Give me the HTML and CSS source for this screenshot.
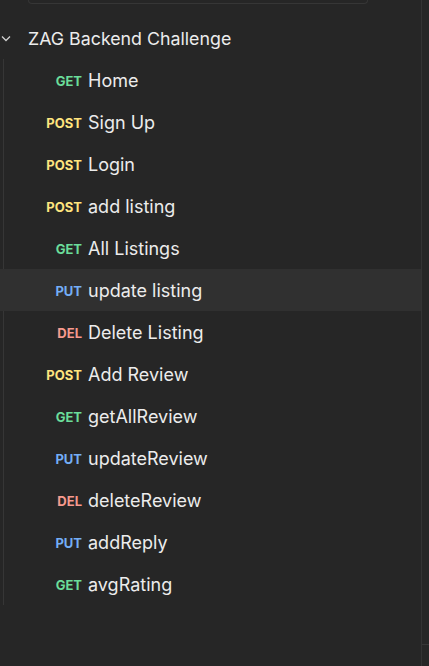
FILE: index.html
```html
<!DOCTYPE html>
<html>
<head>
<meta charset="utf-8">
<link rel="stylesheet" href="styles.css">
</head>
<body>
<div class="app">
  <div class="sidebar">
    <div class="search-wrap"><div class="search"></div></div>
    <div class="collection">
      <svg class="chev" width="12" height="12" viewBox="0 0 12 12"><path d="M2 4.5 L6 8.5 L10 4.5" fill="none" stroke="#d0d0d0" stroke-width="1.3"/></svg>
      <span class="ctitle">ZAG Backend Challenge</span>
    </div>
    <div class="items">
      <div class="row"><span class="m get">GET</span><span class="n">Home</span></div>
      <div class="row"><span class="m post">POST</span><span class="n">Sign Up</span></div>
      <div class="row"><span class="m post">POST</span><span class="n">Login</span></div>
      <div class="row"><span class="m post">POST</span><span class="n">add listing</span></div>
      <div class="row"><span class="m get">GET</span><span class="n">All Listings</span></div>
      <div class="row hover"><span class="m put">PUT</span><span class="n">update listing</span></div>
      <div class="row"><span class="m del">DEL</span><span class="n">Delete Listing</span></div>
      <div class="row"><span class="m post">POST</span><span class="n">Add Review</span></div>
      <div class="row"><span class="m get">GET</span><span class="n">getAllReview</span></div>
      <div class="row"><span class="m put">PUT</span><span class="n">updateReview</span></div>
      <div class="row"><span class="m del">DEL</span><span class="n">deleteReview</span></div>
      <div class="row"><span class="m put">PUT</span><span class="n">addReply</span></div>
      <div class="row"><span class="m get">GET</span><span class="n">avgRating</span></div>
    </div>
  </div>
  <div class="edge"><div class="edge-top"></div><div class="edge-bot"></div></div>
</div>
</body>
</html>
```
FILE: styles.css
```css
html, body {
  margin: 0;
  padding: 0;
  background: #262626;
  height: 100%;
  overflow: hidden;
}
body {
  font-family: Inter, "Noto Sans", sans-serif;
  color: #e8e8e8;
}
.app {
  display: flex;
  height: 666px;
}
.sidebar {
  width: 421px;
  flex: none;
}
.search-wrap {
  padding: 0 53px 0 28px;
}
.search {
  height: 4px;
  margin-top: -1px;
  border: 1px solid #363636;
  border-top: none;
  border-radius: 0 0 4px 4px;
}
.collection {
  margin-top: 13px;
  height: 42px;
  display: flex;
  align-items: center;
}
.chev {
  margin-left: 0;
  width: 12px;
  margin-right: 16px;
}
.ctitle {
  font-size: 17.8px;
  color: #ececec;
}
.items {
  margin-left: 3px;
  border-left: 1px solid #363636;
  width: 418px;
}
.row {
  height: 42px;
  display: flex;
  align-items: center;
  margin-left: -4px;
  padding-left: 4px;
}
.row.hover {
  background: #303030;
}
.m {
  width: 78px;
  text-align: right;
  font-size: 13px;
  font-weight: 700;
  margin-right: 6px;
  padding-top: 1px;
}
.n {
  font-size: 18px;
  color: #ececec;
}
.get { color: #6bdd9a; }
.post { color: #ffe47e; }
.put { color: #74aef6; }
.del { color: #f79a8e; }
.edge {
  flex: 1;
  border-left: 1px solid #333333;
  background: #262626;
  display: flex;
  flex-direction: column;
}
.edge-top {
  height: 644px;
}
.edge-bot {
  border-top: 1px solid #363636;
  flex: 1;
}
```
